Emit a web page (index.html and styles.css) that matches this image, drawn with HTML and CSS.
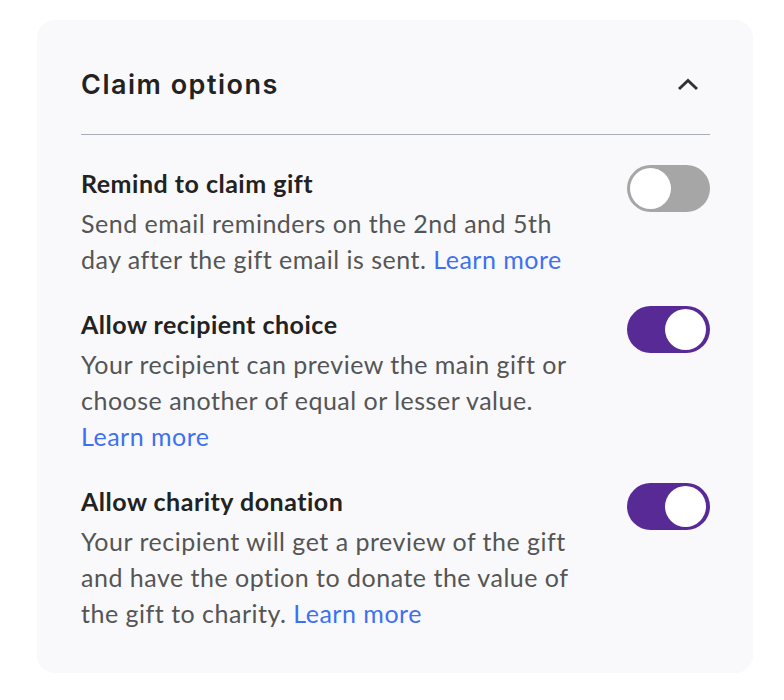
FILE: index.html
```html
<!DOCTYPE html>
<html>
<head>
    <title>Claim options</title>
    <link rel="stylesheet" href="styles.css">
</head>
<body>
    <div class="card">
        <div class="card-header">
            <h2 class="card-title">Claim options</h2>
            <!-- collapse chevron -->
            <svg class="chevron" width="24" height="16" viewBox="0 0 24 16">
                <path d="M3 12 L12 3.5 L21 12" fill="none" stroke="#333" stroke-width="3"/>
            </svg>
        </div>

        <div class="option">
            <div class="option-text">
                <div class="option-title">Remind to claim gift</div>
                <p class="option-desc">Send email reminders on the 2nd and 5th day after the gift email is sent. <a href="#" class="learn">Learn more</a></p>
            </div>
            <span class="toggle"><span class="knob"></span></span>
        </div>

        <div class="option">
            <div class="option-text">
                <div class="option-title">Allow recipient choice</div>
                <p class="option-desc">Your recipient can preview the main gift or choose another of equal or lesser value. <a href="#" class="learn">Learn more</a></p>
            </div>
            <span class="toggle on"><span class="knob"></span></span>
        </div>

        <div class="option">
            <div class="option-text">
                <div class="option-title">Allow charity donation</div>
                <p class="option-desc">Your recipient will get a preview of the gift and have the option to donate the value of the gift to charity. <a href="#" class="learn">Learn more</a></p>
            </div>
            <span class="toggle on"><span class="knob"></span></span>
        </div>
    </div>
</body>
</html>
```
FILE: styles.css
```css
body {
    margin: 0;
    background: #ffffff;
    font-family: "Lato", "Liberation Sans", sans-serif;
}
.card {
    margin: 20px 0 0 37px;
    width: 716px;
    box-sizing: border-box;
    padding: 49px 43px 42px 44px;
    background-color: #f9f9fb;
    border-radius: 18px;
}
.card-header {
    display: flex;
    justify-content: space-between;
    align-items: center;
    padding-bottom: 33px;
    border-bottom: 1px solid #a9adb7;
}
.card-title {
    margin: 0;
    font-family: "Inter", sans-serif;
    font-size: 27px;
    font-weight: 600;
    letter-spacing: 1.5px;
    line-height: 32px;
    color: #222;
}
.chevron {
    margin-right: 10px;
}
.option {
    display: flex;
    justify-content: space-between;
    align-items: flex-start;
    margin-top: 29px;
}
.card-header + .option {
    margin-top: 30px;
}
.option-text {
    width: 505px;
}
.option-title {
    font-size: 25px;
    font-weight: 700;
    letter-spacing: 0.5px;
    line-height: 36px;
    color: #222;
}
.option-desc {
    margin: 4px 0 0 0;
    font-size: 25px;
    letter-spacing: 0.5px;
    line-height: 36px;
    color: #555;
}
.learn {
    color: #3d71f2;
    text-decoration: none;
}
.toggle {
    position: relative;
    display: inline-block;
    width: 83px;
    height: 47px;
    margin-top: 0;
    border-radius: 24px;
    background-color: #a6a6a6;
}
.toggle .knob {
    position: absolute;
    top: 3px;
    left: 3px;
    width: 41px;
    height: 41px;
    border-radius: 50%;
    background-color: #fff;
}
.toggle.on {
    background-color: #582a96;
}
.toggle.on .knob {
    left: auto;
    right: 4px;
}
```
